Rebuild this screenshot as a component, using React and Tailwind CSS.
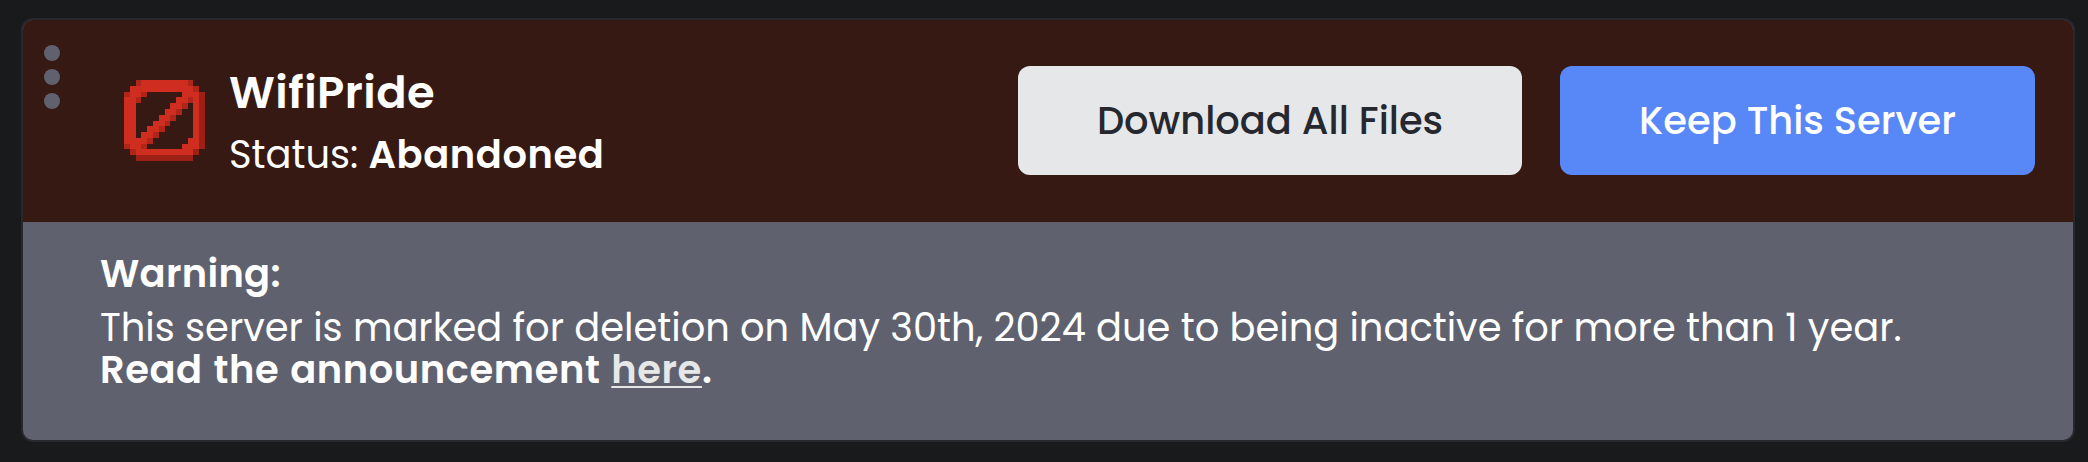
const FILLS = { r: "#cf2d20", m: "#b0251a", d: "#9c2016" };

const BARRIER = [
  "..mrrrrrrrrm..",
  ".rrrrrrrrrrrm.",
  "mrrm......rrrd",
  "rrm......rrmrd",
  "rr......rrm.rd",
  "rr.....rrm..rd",
  "rr....rrm...rd",
  "rr...rrm....rd",
  "rr..rrm.....rd",
  "rr.rrm......rd",
  "rrrrm......rrd",
  "mrrm......rrrd",
  ".mrrrrrrrrrrd.",
  "..dddddddddd..",
];

function BarrierIcon() {
  return (
    <svg className="size-[81px] shrink-0" viewBox="0 0 14 14" shapeRendering="crispEdges" aria-hidden="true">
      {BARRIER.flatMap((row, y) =>
        [...row].map((c, x) =>
          c === "." ? null : <rect key={`${x}-${y}`} x={x} y={y} width="1" height="1" fill={FILLS[c]} />
        )
      )}
    </svg>
  );
}

function DragHandle() {
  return (
    <div className="flex flex-col gap-2 self-start pt-[25px]">
      <span className="size-4 rounded-full bg-[#5f626e]" />
      <span className="size-4 rounded-full bg-[#5f626e]" />
      <span className="size-4 rounded-full bg-[#5f626e]" />
    </div>
  );
}

export default function App() {
  return (
    <div className="h-[462px] w-[2088px] overflow-hidden bg-[#191a1c] pt-[18px] pl-[21px] font-['Poppins','Inter',sans-serif] text-[38.4px] leading-[42px] whitespace-nowrap text-white">
      <section className="flex h-[424px] w-[2054px] flex-col overflow-hidden rounded-xl border-2 border-[#26282d] bg-[#5f626e]">
        <header className="flex h-[202px] shrink-0 items-center bg-[#351912] pr-[38px] pb-[2px] pl-[21px]">
          <DragHandle />
          <div className="ml-16 flex items-center">
            <BarrierIcon />
            <div className="ml-6 flex flex-col gap-[17px] pt-1">
              <h2 className="text-[44.8px] leading-[48px] font-semibold tracking-[0.45px]">WifiPride</h2>
              <p>
                Status: <strong className="font-semibold tracking-[0.6px]">Abandoned</strong>
              </p>
            </div>
          </div>
          <div className="ml-auto flex gap-[38px]">
            <button className="h-[109px] w-[504px] rounded-xl bg-[#e6e7e9] pt-px font-medium text-[#26282f]">Download All Files</button>
            <button className="h-[109px] w-[475px] rounded-xl bg-[#5888f7] pt-px font-medium">Keep This Server</button>
          </div>
        </header>
        <div className="flex flex-col pt-[31px] pl-[77px]">
          <strong className="mb-3 font-semibold tracking-[0.3px]">Warning:</strong>
          <p>This server is marked for deletion on May 30th, 2024 due to being inactive for more than 1 year.</p>
          <p className="font-semibold tracking-[0.6px] [word-spacing:1.1px]">
            Read the announcement{" "}
            <a href="#announcement" className="text-[#e6e7e9] underline decoration-2 underline-offset-[3px]">here</a>.
          </p>
        </div>
      </section>
    </div>
  );
}
